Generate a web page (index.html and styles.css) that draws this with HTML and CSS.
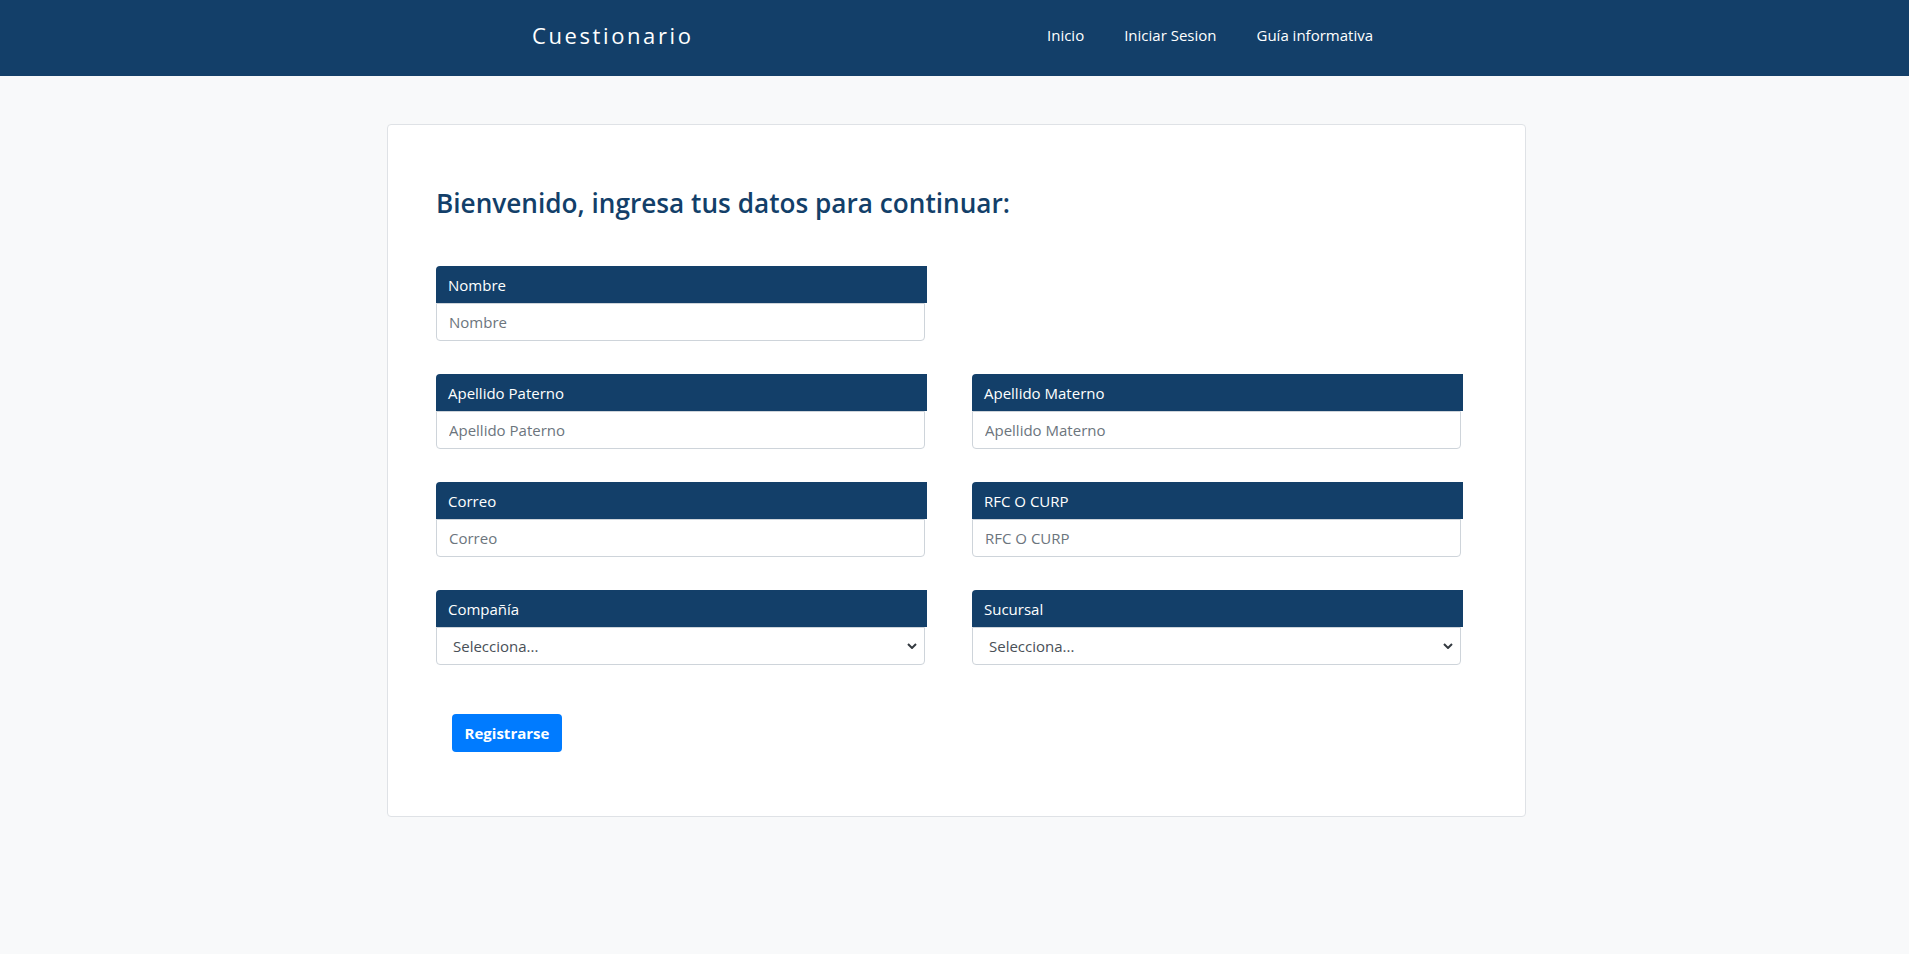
FILE: index.html
```html
<!DOCTYPE html>
<html lang="es">
<head>
<meta charset="utf-8">
<title>Cuestionario</title>
<link rel="stylesheet" href="styles.css">
</head>
<body>
<header class="navbar">
  <div class="nav-inner">
    <a class="brand" href="#">Cuestionario</a>
    <nav class="links">
      <a href="#">Inicio</a>
      <a href="#">Iniciar Sesion</a>
      <a href="#">Guía informativa</a>
    </nav>
  </div>
</header>
<main class="page">
  <section class="card">
    <h2 class="title">Bienvenido, ingresa tus datos para continuar:</h2>
    <form class="form-grid">
      <div class="field">
        <label class="field-label">Nombre</label>
        <input class="field-input" type="text" placeholder="Nombre">
      </div>
      <div class="spacer"></div>
      <div class="field">
        <label class="field-label">Apellido Paterno</label>
        <input class="field-input" type="text" placeholder="Apellido Paterno">
      </div>
      <div class="field">
        <label class="field-label">Apellido Materno</label>
        <input class="field-input" type="text" placeholder="Apellido Materno">
      </div>
      <div class="field">
        <label class="field-label">Correo</label>
        <input class="field-input" type="text" placeholder="Correo">
      </div>
      <div class="field">
        <label class="field-label">RFC O CURP</label>
        <input class="field-input" type="text" placeholder="RFC O CURP">
      </div>
      <div class="field">
        <label class="field-label">Compañía</label>
        <div class="select-wrap">
          <select class="field-select"><option>Selecciona...</option></select>
          <svg class="chevron" viewBox="0 0 10 6" width="10" height="6"><path d="M1 1 L5 5 L9 1" fill="none" stroke="#343a40" stroke-width="2"/></svg>
        </div>
      </div>
      <div class="field">
        <label class="field-label">Sucursal</label>
        <div class="select-wrap">
          <select class="field-select"><option>Selecciona...</option></select>
          <svg class="chevron" viewBox="0 0 10 6" width="10" height="6"><path d="M1 1 L5 5 L9 1" fill="none" stroke="#343a40" stroke-width="2"/></svg>
        </div>
      </div>
    </form>
    <button class="btn-primary" type="button">Registrarse</button>
  </section>
</main>
</body>
</html>
```
FILE: styles.css
```css
* { box-sizing: border-box; }
html, body { margin: 0; padding: 0; }
body {
  font-family: "Open Sans", "Noto Sans", sans-serif;
  background: #f8f9fa;
  color: #212529;
  min-height: 954px;
}
.navbar {
  background: #133f69;
  height: 76px;
}
.nav-inner {
  width: 845px;
  margin: 0 auto;
  height: 100%;
  display: flex;
  align-items: center;
  justify-content: space-between;
  padding: 0 4px 7px 0;
}
.brand {
  color: #fff;
  text-decoration: none;
  font-size: 22px;
  letter-spacing: 2.6px;
}
.links {
  display: flex;
  gap: 40px;
}
.links a {
  color: #fff;
  text-decoration: none;
  font-size: 15px;
}
.page {
  padding: 48px 0 0 4px;
}
.card {
  width: 1139px;
  margin: 0 auto;
  background: #fff;
  border: 1px solid #dfe2e6;
  border-radius: 4px;
  padding: 63px 63px 64px 48px;
}
.title {
  margin: 0 0 47px;
  color: #133f69;
  font-size: 26.2px;
  font-weight: 600;
  line-height: 31px;
}
.form-grid {
  display: grid;
  grid-template-columns: 491px 491px;
  column-gap: 45px;
  row-gap: 33px;
}
.field {
  display: flex;
  flex-direction: column;
}
.field-label {
  background: #133f69;
  color: #fff;
  height: 37px;
  display: flex;
  align-items: center;
  padding: 0 12px;
  font-size: 15px;
  border-radius: 4px 0 0 0;
}
.field-input,
.field-select {
  width: calc(100% - 2px);
  height: 38px;
  border: 1px solid #ced4da;
  border-radius: 0 0 4px 4px;
  font-family: inherit;
  font-size: 15px;
  background: #fff;
  outline: none;
}
.field-input {
  padding: 0 12px;
  color: #495057;
}
.field-input::placeholder {
  color: #6c757d;
}
.select-wrap {
  position: relative;
}
.field-select {
  appearance: none;
  -webkit-appearance: none;
  padding: 0 16px;
  color: #495057;
  display: block;
}
.chevron {
  position: absolute;
  right: 10px;
  top: 16px;
}
.btn-primary {
  margin: 49px 0 0 16px;
  background: #007bff;
  border: none;
  border-radius: 4px;
  color: #fff;
  font-family: inherit;
  font-weight: 700;
  font-size: 15px;
  width: 110px;
  height: 38px;
  padding: 0;
}
```
